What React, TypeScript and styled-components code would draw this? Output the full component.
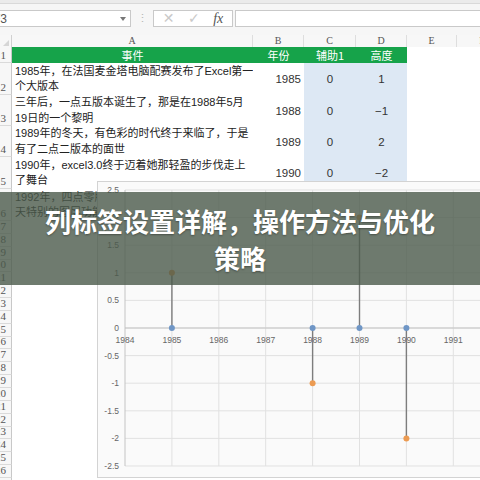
import React from "react";
import styled, { createGlobalStyle } from "styled-components";

const Global = createGlobalStyle`
  html, body { margin: 0; padding: 0; background: #fff; }
  body { width: 480px; height: 480px; overflow: hidden; }
  #root { width: 480px; height: 480px; }
`;

const COLS = "12px 241px 51px 52px 51px 50px 51px";

const Screen = styled.div`
  position: relative;
  width: 480px;
  height: 480px;
  overflow: hidden;
  background: #fff;
  font-family: "Liberation Sans", "Noto Sans CJK SC", sans-serif;
`;

const RibbonEdge = styled.div`
  height: 3px;
  background: #ebebeb;
  border-bottom: 1px solid #d9d9d9;
`;

const FormulaBar = styled.div`
  display: flex;
  align-items: center;
  height: 17px;
  padding: 6px 0 8px;
  background: #f6f6f6;
`;

const NameBox = styled.div`
  display: flex;
  align-items: center;
  justify-content: space-between;
  width: 131px;
  height: 17px;
  box-sizing: border-box;
  border: 1px solid #c9c9c9;
  border-left: none;
  background: #fff;
  padding-right: 4px;
  overflow: hidden;
  font-size: 12px;
  color: #555;
`;

const NameText = styled.span`
  margin-left: -7px;
`;

const DropArrow = styled.span`
  width: 0;
  height: 0;
  border-left: 3px solid transparent;
  border-right: 3px solid transparent;
  border-top: 4px solid #777;
`;

const BarDivider = styled.span`
  width: 22px;
  text-align: center;
  color: #b5b5b5;
  font-size: 11px;
  line-height: 17px;
`;

const FxBox = styled.div`
  display: flex;
  align-items: center;
  justify-content: space-around;
  width: 80px;
  height: 17px;
  box-sizing: border-box;
  border: 1px solid #c9c9c9;
  background: #fff;
  padding: 0 2px;
`;

const FxGlyph = styled.span<{ $main?: boolean }>`
  font-family: ${(p) => (p.$main ? '"Liberation Serif", serif' : '"DejaVu Sans", sans-serif')};
  font-style: ${(p) => (p.$main ? "italic" : "normal")};
  font-size: ${(p) => (p.$main ? "14px" : "14px")};
  color: ${(p) => (p.$main ? "#555" : "#c9c9c9")};
  line-height: 15px;
`;

const FormulaInput = styled.div`
  flex: 1;
  margin-left: 2px;
  height: 17px;
  box-sizing: border-box;
  border: 1px solid #c9c9c9;
  border-right: none;
  background: #fff;
`;

const ColumnHeaderRow = styled.div`
  display: grid;
  grid-template-columns: ${COLS};
  height: 12px;
  background: #f7f7f7;
`;

const Corner = styled.div`
  position: relative;
  border-right: 1px solid #d0d0d0;
  &::after {
    content: "";
    position: absolute;
    right: 2px;
    bottom: 1px;
    width: 0;
    height: 0;
    border-left: 6px solid transparent;
    border-bottom: 6px solid #d6d6d6;
  }
`;

const ColHead = styled.div`
  font-family: "Liberation Serif", serif;
  font-size: 10px;
  line-height: 12px;
  color: #555;
  text-align: center;
  border-right: 1px solid #dedede;
`;

const SheetRow = styled.div<{ $h: number }>`
  display: grid;
  grid-template-columns: ${COLS};
  height: ${(p) => p.$h}px;
`;

const RowHead = styled.div`
  display: flex;
  align-items: flex-end;
  justify-content: flex-end;
  box-sizing: border-box;
  padding: 0 5px 1px 0;
  overflow: hidden;
  font-family: "Liberation Serif", serif;
  font-size: 11px;
  line-height: 12px;
  color: #555;
  background: #f7f7f7;
  border-right: 1px solid #c8c8c8;
  border-bottom: 1px solid #dadada;
`;

type Fill = "green" | "blue" | "none";

const Cell = styled.div<{ $fill?: Fill; $align?: "left" | "center" | "right" }>`
  display: flex;
  flex-direction: column;
  justify-content: center;
  align-items: ${(p) =>
    p.$align === "right" ? "flex-end" : p.$align === "center" ? "center" : "flex-start"};
  box-sizing: border-box;
  padding: 0 3px;
  overflow: hidden;
  white-space: nowrap;
  background: ${(p) =>
    p.$fill === "green" ? "#16a34a" : p.$fill === "blue" ? "#dde8f4" : "transparent"};
  color: ${(p) => (p.$fill === "green" ? "#fff" : "#333")};
`;

const HeadLabel = styled.span`
  font-family: "Noto Sans CJK SC", sans-serif;
  font-size: 11px;
  line-height: 16px;
`;

const TextLine = styled.span`
  font-family: "Liberation Sans", "Noto Sans CJK SC", sans-serif;
  font-size: 11px;
  line-height: 15.5px;
  color: #222;
`;

const NumText = styled.span`
  font-family: "Liberation Sans", sans-serif;
  font-size: 11.5px;
  color: #333;
`;

const ChartFrame = styled.div`
  position: absolute;
  left: 97px;
  top: 181px;
  width: 400px;
  height: 297px;
  box-sizing: border-box;
  background: #fafafa;
  border: 1px solid #d3d3d3;
`;

const Banner = styled.div`
  position: absolute;
  left: 0;
  right: 0;
  top: 192px;
  height: 93px;
  display: flex;
  align-items: center;
  justify-content: center;
  background: rgba(75, 90, 75, 0.8);
`;

const BannerTitle = styled.h1`
  margin: 0;
  width: 400px;
  font-family: "Noto Sans CJK SC", sans-serif;
  font-weight: 700;
  font-size: 26px;
  line-height: 37px;
  color: #fff;
  text-align: center;
  text-shadow: 0 1px 2px rgba(0, 0, 0, 0.35);
`;

const dataRows = [
  { h: 32, lines: ["1985年，在法国麦金塔电脑配赛发布了Excel第一", "个大版本"], year: "1985", c: "0", d: "1" },
  { h: 31, lines: ["三年后，一点五版本诞生了，那是在1988年5月", "19日的一个黎明"], year: "1988", c: "0", d: "−1" },
  { h: 31, lines: ["1989年的冬天，有色彩的时代终于来临了，于是", "有了二点二版本的面世"], year: "1989", c: "0", d: "2" },
  { h: 32, lines: ["1990年，excel3.0终于迈着她那轻盈的步伐走上", "了舞台"], year: "1990", c: "0", d: "−2" },
];

const Empty = () => (
  <>
    <Cell />
    <Cell />
    <Cell />
    <Cell />
    <Cell />
    <Cell />
  </>
);

const X0 = 27;
const YEAR_W = 46.9;
const Y0 = 146;
const UNIT = 55.2;
const xOf = (yr: number) => X0 + (yr - 1984) * YEAR_W;
const yOf = (v: number) => Y0 - v * UNIT;

const points = [
  { yr: 1985, v: 1 },
  { yr: 1988, v: -1 },
  { yr: 1989, v: 2 },
  { yr: 1990, v: -2 },
];

const yTicks = [2.5, 2, 1.5, 1, 0.5, 0, -0.5, -1, -1.5, -2, -2.5];
const years = [1984, 1985, 1986, 1987, 1988, 1989, 1990, 1991];

const StemChart = () => (
  <svg width="398" height="295" viewBox="0 0 398 295">
    {yTicks.map((t) => (
      <line key={"h" + t} x1={X0} x2={398} y1={yOf(t)} y2={yOf(t)} stroke="#e1e1e1" strokeWidth="1" />
    ))}
    {years.slice(1).concat([1992]).map((yr) => (
      <line key={"v" + yr} x1={xOf(yr)} x2={xOf(yr)} y1={yOf(2.5)} y2={yOf(-2.5)} stroke="#e1e1e1" strokeWidth="1" />
    ))}
    <line x1={X0} x2={X0} y1={yOf(2.5)} y2={yOf(-2.5)} stroke="#c4c4c4" strokeWidth="1" />
    <line x1={X0} x2={398} y1={Y0} y2={Y0} stroke="#c4c4c4" strokeWidth="1" />
    {yTicks.map((t) => (
      <text
        key={"yl" + t}
        x={X0 - 6}
        y={yOf(t) + 3}
        textAnchor="end"
        fontFamily="Liberation Sans, sans-serif"
        fontSize="8.5"
        fill="#666"
      >
        {String(t)}
      </text>
    ))}
    {years.map((yr) => (
      <text
        key={"xl" + yr}
        x={xOf(yr)}
        y={Y0 + 15}
        textAnchor="middle"
        fontFamily="Liberation Sans, sans-serif"
        fontSize="8.5"
        fill="#666"
      >
        {yr}
      </text>
    ))}
    {points.map((p) => (
      <g key={"p" + p.yr}>
        <line x1={xOf(p.yr)} x2={xOf(p.yr)} y1={Y0} y2={yOf(p.v)} stroke="#7d7d7d" strokeWidth="1.4" />
        <circle cx={xOf(p.yr)} cy={yOf(p.v)} r="3" fill="#ec9b52" />
        <circle cx={xOf(p.yr)} cy={Y0} r="3" fill="#6f96c6" />
      </g>
    ))}
  </svg>
);

export default function App() {
  const extraRows = Array.from({ length: 22 }, (_, i) => i + 7);
  return (
    <>
      <Global />
      <Screen>
        <RibbonEdge />
        <FormulaBar>
          <NameBox>
            <NameText>F3</NameText>
            <DropArrow />
          </NameBox>
          <BarDivider>⋮</BarDivider>
          <FxBox>
            <FxGlyph>✕</FxGlyph>
            <FxGlyph>✓</FxGlyph>
            <FxGlyph $main>fx</FxGlyph>
          </FxBox>
          <FormulaInput />
        </FormulaBar>

        <ColumnHeaderRow>
          <Corner />
          <ColHead>A</ColHead>
          <ColHead>B</ColHead>
          <ColHead>C</ColHead>
          <ColHead>D</ColHead>
          <ColHead>E</ColHead>
          <ColHead>F</ColHead>
        </ColumnHeaderRow>

        <SheetRow $h={16}>
          <RowHead>1</RowHead>
          <Cell $fill="green" $align="center">
            <HeadLabel>事件</HeadLabel>
          </Cell>
          <Cell $fill="green" $align="center">
            <HeadLabel>年份</HeadLabel>
          </Cell>
          <Cell $fill="green" $align="center">
            <HeadLabel>辅助1</HeadLabel>
          </Cell>
          <Cell $fill="green" $align="center">
            <HeadLabel>高度</HeadLabel>
          </Cell>
          <Cell />
          <Cell />
        </SheetRow>

        {dataRows.map((r, i) => (
          <SheetRow key={r.year} $h={r.h}>
            <RowHead>{i + 2}</RowHead>
            <Cell>
              {r.lines.map((l) => (
                <TextLine key={l}>{l}</TextLine>
              ))}
            </Cell>
            <Cell $align="right">
              <NumText>{r.year}</NumText>
            </Cell>
            <Cell $fill="blue" $align="center">
              <NumText>{r.c}</NumText>
            </Cell>
            <Cell $fill="blue" $align="center">
              <NumText>{r.d}</NumText>
            </Cell>
            <Cell />
            <Cell />
          </SheetRow>
        ))}

        <SheetRow $h={32}>
          <RowHead>6</RowHead>
          <Cell>
            <TextLine>1992年，四点零版本问世，这一年的春</TextLine>
            <TextLine>天特别的图层功能已经</TextLine>
          </Cell>
          <Cell />
          <Cell />
          <Cell />
          <Cell />
          <Cell />
        </SheetRow>

        {extraRows.map((n) => (
          <SheetRow key={n} $h={12.85}>
            <RowHead>{n}</RowHead>
            <Empty />
          </SheetRow>
        ))}

        <ChartFrame>
          <StemChart />
        </ChartFrame>

        <Banner>
          <BannerTitle>列标签设置详解，操作方法与优化策略</BannerTitle>
        </Banner>
      </Screen>
    </>
  );
}
